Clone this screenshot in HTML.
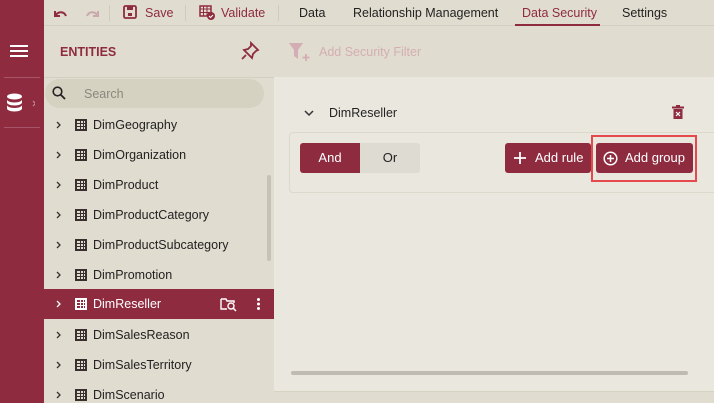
<!DOCTYPE html>
<html><head><style>
*{margin:0;padding:0;box-sizing:border-box}
html,body{width:714px;height:403px;overflow:hidden}
body{background:#e0dccf;font-family:"Liberation Sans",sans-serif;font-size:12.5px;color:#222;position:relative}
.abs{position:absolute}
.side{left:0;top:0;width:44px;height:403px;background:#8f2b3f}
.top{left:44px;top:0;width:670px;height:26px;border-bottom:1px solid #d3cfc1}
.t{position:absolute;top:6px;white-space:nowrap}
.row{position:absolute;left:44px;width:230px;height:30px}
.row .ch{position:absolute;left:12px;top:11px}
.row .gi{position:absolute;left:31px;top:9px;width:12px;height:12px;border:2px solid #3a2f2f;background:
linear-gradient(#3a2f2f,#3a2f2f) 2.5px 0/1.3px 100% no-repeat,linear-gradient(#3a2f2f,#3a2f2f) 5.5px 0/1.3px 100% no-repeat,linear-gradient(#3a2f2f,#3a2f2f) 0 2px/100% 1.3px no-repeat,linear-gradient(#3a2f2f,#3a2f2f) 0 5px/100% 1.3px no-repeat}
.row .n{position:absolute;left:49px;top:8px}
.btn{position:absolute;top:143px;height:30px;background:#8f2b3f;color:#fff;border-radius:3px;font-size:13px;line-height:30px}
</style></head><body>
<div class="abs side"></div>
<div class="abs" style="left:10px;top:45px;width:18px;height:2px;background:#fff;box-shadow:0 5px 0 #fff,0 10px 0 #fff"></div>
<div class="abs" style="left:4px;top:77px;width:36px;height:1px;background:#a8546a"></div>
<svg class="abs" style="left:5px;top:93px" width="30" height="22"><ellipse cx="9.5" cy="3.5" rx="7.5" ry="3" fill="#fff"/><path d="M2 6.5v3c0 1.6 3.4 3 7.5 3s7.5-1.4 7.5-3v-3c0 1.6-3.4 3-7.5 3S2 8.1 2 6.5zM2 12v3.5c0 1.6 3.4 3 7.5 3s7.5-1.4 7.5-3V12c0 1.6-3.4 3-7.5 3S2 13.6 2 12z" fill="#fff"/><path d="M28 8l2.5 2.5-2.5 2.5" stroke="#c58a97" fill="none" stroke-width="1.2"/></svg>
<div class="abs" style="left:4px;top:127px;width:36px;height:1px;background:#a8546a"></div>

<div class="abs top"></div>
<svg class="abs" style="left:52px;top:7px" width="50" height="14"><path d="M3 4v5h5M3 9c3-5 9-5 11 0" stroke="#8f2b3f" stroke-width="2" fill="none"/><path d="M46 4v5h-5M46 9c-3-5-9-5-11 0" stroke="#c9a8ae" stroke-width="2" fill="none"/></svg>
<div class="abs" style="left:109px;top:5px;width:1px;height:16px;background:#cfcbbd"></div>
<svg class="abs" style="left:123px;top:5px" width="15" height="15"><rect x="1" y="1" width="12" height="12" rx="1.5" stroke="#8f2b3f" stroke-width="1.8" fill="none"/><rect x="4" y="1" width="6" height="4" fill="#8f2b3f"/><rect x="5" y="8" width="4" height="3" fill="#8f2b3f"/></svg>
<div class="t" style="left:145px;color:#8f2b3f">Save</div>
<div class="abs" style="left:185px;top:5px;width:1px;height:16px;background:#cfcbbd"></div>
<svg class="abs" style="left:199px;top:5px" width="17" height="16"><rect x="1" y="1" width="11" height="10" stroke="#8f2b3f" stroke-width="1.5" fill="none"/><path d="M1 4h11M1 7.5h11M4.5 1v10M8 1v10" stroke="#8f2b3f"/><circle cx="12" cy="11" r="4" fill="#8f2b3f"/><path d="M10 11l1.5 1.5 2.5-2.5" stroke="#fff" fill="none"/></svg>
<div class="t" style="left:221px;color:#8f2b3f">Validate</div>
<div class="abs" style="left:278px;top:5px;width:1px;height:16px;background:#cfcbbd"></div>
<div class="t" style="left:299px">Data</div>
<div class="t" style="left:353px">Relationship Management</div>
<div class="t" style="left:522px;color:#8f2b3f">Data Security</div>
<div class="abs" style="left:515px;top:24px;width:85px;height:2px;background:#8f2b3f"></div>
<div class="t" style="left:622px">Settings</div>

<div class="abs" style="left:60px;top:45px;font-weight:bold;color:#8f2b3f;font-size:12.5px">ENTITIES</div>
<svg class="abs" style="left:240px;top:41px" width="20" height="20"><path d="M11 2l7 7-2 1-3 3-1 4-8-8 4-1 3-3z" stroke="#8f2b3f" stroke-width="1.8" fill="none"/><path d="M6 14l-4 4" stroke="#8f2b3f" stroke-width="1.8"/></svg>
<div class="abs" style="left:44px;top:77px;width:230px;height:1px;background:#d3cfc1"></div>
<div class="abs" style="left:45px;top:79px;width:219px;height:29px;border-radius:15px;background:#d6d2c2"></div>
<svg class="abs" style="left:52px;top:86px" width="14" height="14"><circle cx="5.5" cy="5.5" r="4.3" stroke="#222" stroke-width="1.6" fill="none"/><path d="M8.5 8.5l4.5 4.5" stroke="#222" stroke-width="1.8"/></svg>
<div class="abs" style="left:84px;top:87px;color:#8a877d">Search</div>

<svg width="0" height="0" style="position:absolute"><defs><path id="chv" d="M1 1l3 3-3 3" stroke-width="1.3" fill="none"/></defs></svg>
<div class="row" style="top:110px"><svg class="ch" width="6" height="8"><use href="#chv" stroke="#333"/></svg><span class="gi"></span><span class="n">DimGeography</span></div>
<div class="row" style="top:140px"><svg class="ch" width="6" height="8"><use href="#chv" stroke="#333"/></svg><span class="gi"></span><span class="n">DimOrganization</span></div>
<div class="row" style="top:170px"><svg class="ch" width="6" height="8"><use href="#chv" stroke="#333"/></svg><span class="gi"></span><span class="n">DimProduct</span></div>
<div class="row" style="top:200px"><svg class="ch" width="6" height="8"><use href="#chv" stroke="#333"/></svg><span class="gi"></span><span class="n">DimProductCategory</span></div>
<div class="row" style="top:230px"><svg class="ch" width="6" height="8"><use href="#chv" stroke="#333"/></svg><span class="gi"></span><span class="n">DimProductSubcategory</span></div>
<div class="row" style="top:260px"><svg class="ch" width="6" height="8"><use href="#chv" stroke="#333"/></svg><span class="gi"></span><span class="n">DimPromotion</span></div>
<div class="row" style="top:289px;background:#8f2b3f;color:#fff"><svg class="ch" width="6" height="8"><use href="#chv" stroke="#fff"/></svg><span class="gi" style="border-color:#fff;background:linear-gradient(#fff,#fff) 2.5px 0/1.3px 100% no-repeat,linear-gradient(#fff,#fff) 5.5px 0/1.3px 100% no-repeat,linear-gradient(#fff,#fff) 0 2px/100% 1.3px no-repeat,linear-gradient(#fff,#fff) 0 5px/100% 1.3px no-repeat"></span><span class="n">DimReseller</span>
<svg style="position:absolute;left:176px;top:8px" width="18" height="15"><path d="M1 2h5l1 2h7v2M1 2v10h6" stroke="#fff" stroke-width="1.4" fill="none"/><circle cx="11" cy="9" r="3" stroke="#fff" stroke-width="1.4" fill="none"/><path d="M13 11l3 3" stroke="#fff" stroke-width="1.5"/></svg>
<div style="position:absolute;left:213px;top:9px;width:3px;height:3px;background:#fff;border-radius:50%;box-shadow:0 4.5px 0 #fff,0 9px 0 #fff"></div></div>
<div class="row" style="top:320px"><svg class="ch" width="6" height="8"><use href="#chv" stroke="#333"/></svg><span class="gi"></span><span class="n">DimSalesReason</span></div>
<div class="row" style="top:350px"><svg class="ch" width="6" height="8"><use href="#chv" stroke="#333"/></svg><span class="gi"></span><span class="n">DimSalesTerritory</span></div>
<div class="row" style="top:380px"><svg class="ch" width="6" height="8"><use href="#chv" stroke="#333"/></svg><span class="gi"></span><span class="n">DimScenario</span></div>
<div class="abs" style="left:267px;top:175px;width:4px;height:86px;border-radius:2px;background:#c6c2b5"></div>

<svg class="abs" style="left:288px;top:41px" width="24" height="22"><path d="M1 2h14l-5 7v9l-4-3V9z" fill="#d4aeb4"/><path d="M18 13v7M14.5 16.5h7" stroke="#d4aeb4" stroke-width="1.8"/></svg>
<div class="abs" style="left:319px;top:45px;color:#d4aeb4">Add Security Filter</div>

<div class="abs" style="left:274px;top:77px;width:440px;height:315px;background:#eae7df;border-bottom:1px solid #d7d3c3"></div>
<svg class="abs" style="left:304px;top:109px" width="10" height="8"><path d="M1 2l4 4 4-4" stroke="#333" stroke-width="1.5" fill="none"/></svg>
<div class="abs" style="left:329px;top:106px">DimReseller</div>
<svg class="abs" style="left:672px;top:105px" width="12" height="14"><rect x="0" y="1.5" width="12" height="2" fill="#8f2b3f"/><rect x="4" y="0" width="4" height="2" fill="#8f2b3f"/><rect x="1.5" y="4" width="9" height="10" fill="#8f2b3f"/><path d="M4 7l4 4M8 7l-4 4" stroke="#fff" stroke-width="1.2"/></svg>
<div class="abs" style="left:289px;top:132px;width:425px;height:61px;border:1px solid #dcd8cb;border-right:none;border-radius:4px 0 0 4px"></div>
<div class="btn" style="left:300px;width:60px;text-align:center;border-radius:3px 0 0 3px">And</div>
<div class="abs" style="left:360px;top:143px;width:60px;height:30px;background:#dedbd2;border-radius:0 3px 3px 0;text-align:center;line-height:30px;font-size:13px">Or</div>
<div class="btn" style="left:505px;width:86px"><svg style="position:absolute;left:9px;top:9px" width="12" height="12"><path d="M6 0v12M0 6h12" stroke="#fff" stroke-width="1.8"/></svg><span style="position:absolute;left:30px">Add rule</span></div>
<div class="abs" style="left:591px;top:135px;width:106px;height:47px;border:2px solid #e5484d"></div>
<div class="btn" style="left:596px;width:97px"><svg style="position:absolute;left:7px;top:8px" width="15" height="15"><circle cx="7.5" cy="7.5" r="6.3" stroke="#fff" stroke-width="1.5" fill="none"/><path d="M7.5 4v7M4 7.5h7" stroke="#fff" stroke-width="1.5"/></svg><span style="position:absolute;left:29px">Add group</span></div>
<div class="abs" style="left:291px;top:371px;width:397px;height:4px;border-radius:2px;background:#bfbbb2"></div>
</body></html>
